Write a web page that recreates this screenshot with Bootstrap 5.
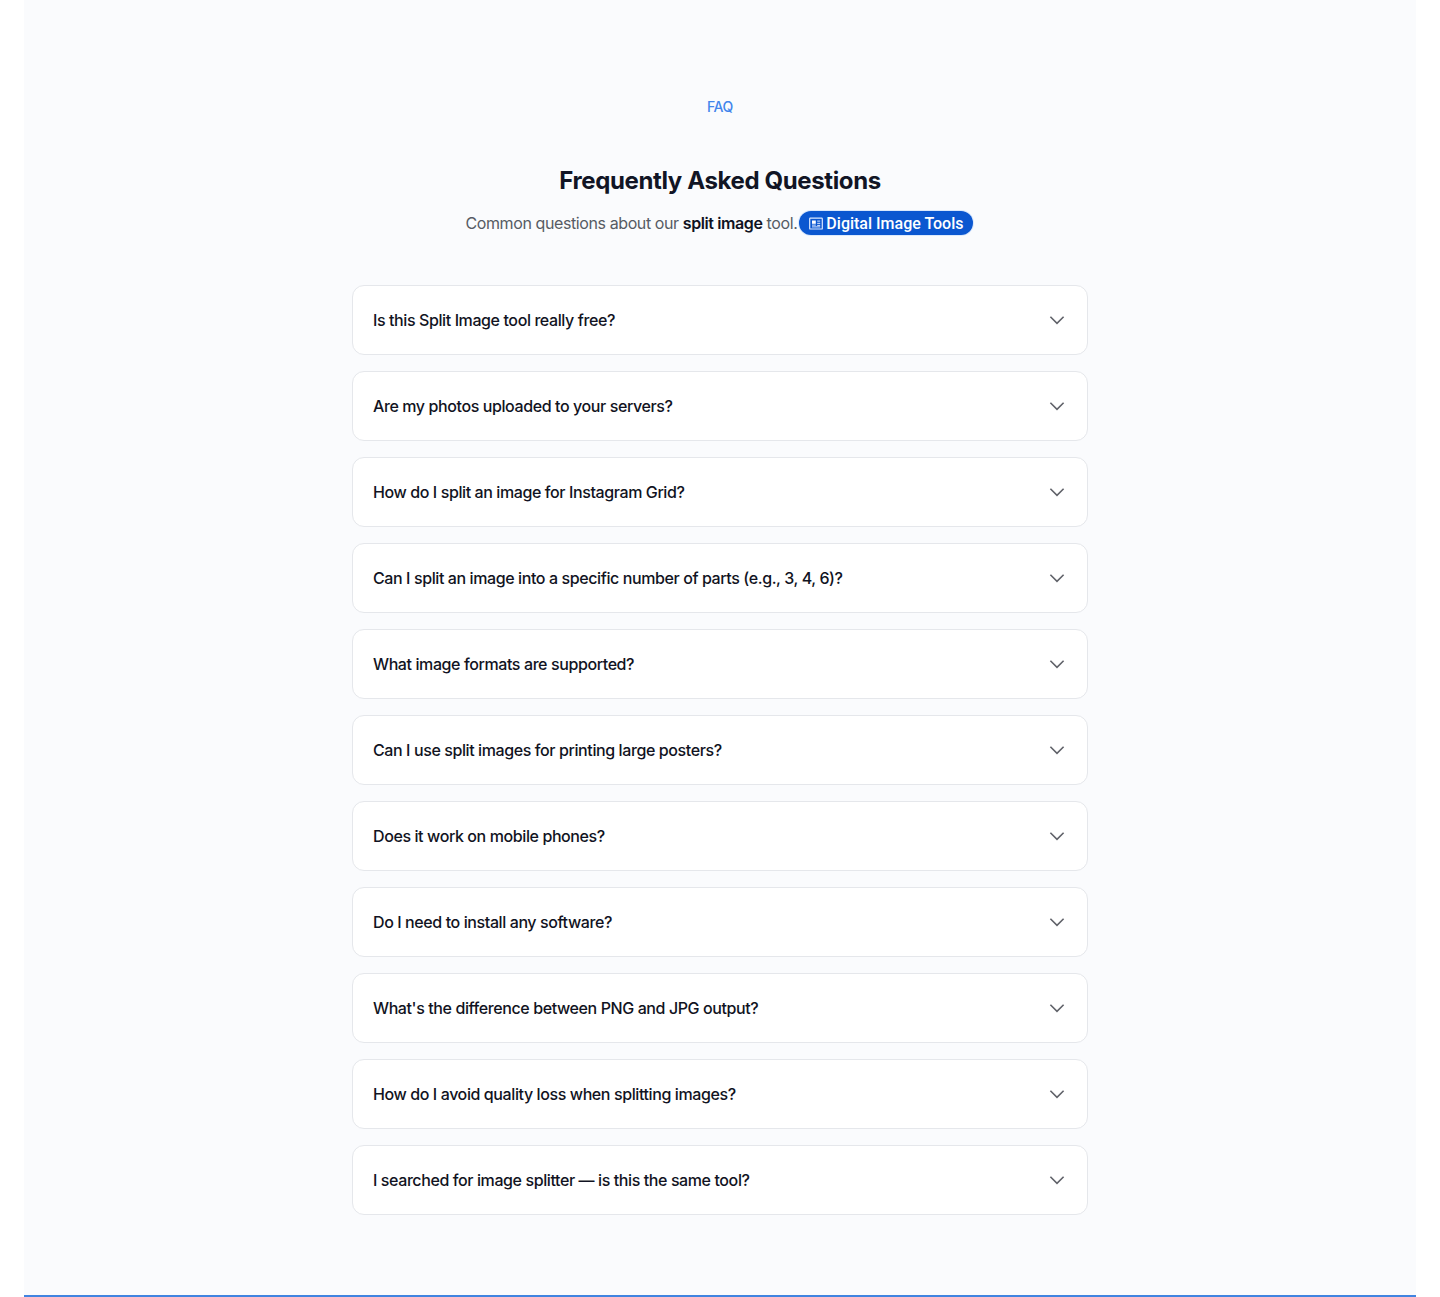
<!DOCTYPE html>
<html lang="en">
<head>
<meta charset="utf-8">
<meta name="viewport" content="width=device-width, initial-scale=1">
<title>Frequently Asked Questions</title>
<link href="https://cdn.jsdelivr.net/npm/bootstrap@5.3.0/dist/css/bootstrap.min.css" rel="stylesheet">
<style>
body { font-family: Inter, "Liberation Sans", sans-serif; font-size: 16px; line-height: 24px; letter-spacing: -0.4px; color: #111322; background: #fff; }
.faq-section { min-height: 1297px; background: #fafbfd; border-bottom: 2px solid #4184e0; padding-top: 97px; }
.faq-eyebrow { font-size: 14px; line-height: 20px; font-weight: 500; color: #4285ec; margin-bottom: 48px; }
.faq-title { font-size: 24px; line-height: 32px; font-weight: 700; letter-spacing: -0.38px; margin-bottom: 14px; color: #111525; }
.faq-intro { height: 24px; color: #565b64; margin-bottom: 50px; padding-right: 2px; }
.faq-intro strong { font-weight: 600; color: #0f1222; }
.tool-pill { height: 24px; padding: 1px 9px 0 10px; border-radius: 12px; background: #0b57d0; color: #fff; font-family: Roboto, sans-serif; font-weight: 500; letter-spacing: 0; margin-left: 2px; box-shadow: 0 0 0 1px #dbe9fc; gap: 3px; }
.faq-list { width: 736px; }
.faq-item { height: 70px; padding: 0 20px; border: 1px solid #e5e7eb; border-radius: 12px; background: #fff; color: #111322; font-weight: 500; letter-spacing: -0.4px; }
</style>
<script src="https://cdn.jsdelivr.net/npm/bootstrap@5.3.0/dist/js/bootstrap.bundle.min.js"></script>
</head>
<body>
<svg class="d-none"><symbol id="chevron" viewBox="0 0 20 20"><path d="M3.4 6.8 10 13.4l6.6-6.6" fill="none" stroke="#606269" stroke-width="1.6"/></symbol></svg>
<main class="px-4">
<section class="faq-section d-flex flex-column align-items-center">
<div class="faq-eyebrow">FAQ</div>
<h2 class="faq-title">Frequently Asked Questions</h2>
<div class="faq-intro d-flex align-items-center">
<span>Common questions about our <strong>split image</strong> tool.</span>
<a href="#" class="tool-pill d-inline-flex align-items-center text-decoration-none"><svg width="14" height="14" viewBox="0 0 14 14" fill="none" stroke="#dce9ff" stroke-width="1.2"><rect x=".7" y="1.2" width="12.6" height="10.8" rx=".6"/><path d="M3 8.1h3.8M8.2 4.1h3M8.2 6.3h3M8.2 8.4h3M3 9.9h8.2" stroke-width="1"/><path d="M3 3.5h3.8v3.3H3z" fill="#fff" stroke="none"/></svg><span>Digital Image Tools</span></a>
</div>
<div class="faq-list d-flex flex-column gap-3">
<button type="button" class="faq-item d-flex align-items-center justify-content-between"><span>Is this Split Image tool really free?</span><svg width="20" height="20"><use href="#chevron"/></svg></button>
<button type="button" class="faq-item d-flex align-items-center justify-content-between"><span>Are my photos uploaded to your servers?</span><svg width="20" height="20"><use href="#chevron"/></svg></button>
<button type="button" class="faq-item d-flex align-items-center justify-content-between"><span>How do I split an image for Instagram Grid?</span><svg width="20" height="20"><use href="#chevron"/></svg></button>
<button type="button" class="faq-item d-flex align-items-center justify-content-between"><span>Can I split an image into a specific number of parts (e.g., 3, 4, 6)?</span><svg width="20" height="20"><use href="#chevron"/></svg></button>
<button type="button" class="faq-item d-flex align-items-center justify-content-between"><span>What image formats are supported?</span><svg width="20" height="20"><use href="#chevron"/></svg></button>
<button type="button" class="faq-item d-flex align-items-center justify-content-between"><span>Can I use split images for printing large posters?</span><svg width="20" height="20"><use href="#chevron"/></svg></button>
<button type="button" class="faq-item d-flex align-items-center justify-content-between"><span>Does it work on mobile phones?</span><svg width="20" height="20"><use href="#chevron"/></svg></button>
<button type="button" class="faq-item d-flex align-items-center justify-content-between"><span>Do I need to install any software?</span><svg width="20" height="20"><use href="#chevron"/></svg></button>
<button type="button" class="faq-item d-flex align-items-center justify-content-between"><span>What's the difference between PNG and JPG output?</span><svg width="20" height="20"><use href="#chevron"/></svg></button>
<button type="button" class="faq-item d-flex align-items-center justify-content-between"><span>How do I avoid quality loss when splitting images?</span><svg width="20" height="20"><use href="#chevron"/></svg></button>
<button type="button" class="faq-item d-flex align-items-center justify-content-between"><span>I searched for image splitter — is this the same tool?</span><svg width="20" height="20"><use href="#chevron"/></svg></button>
</div>
</section>
</main>
</body>
</html>
